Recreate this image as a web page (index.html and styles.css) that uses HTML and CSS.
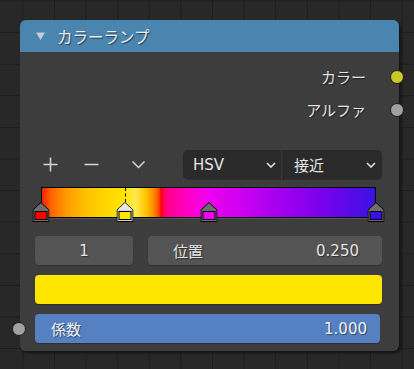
FILE: index.html
```html
<!DOCTYPE html>
<html lang="ja">
<head>
    <meta charset="UTF-8">
    <meta name="viewport" content="width=device-width, initial-scale=1.0">
    <title>カラーランプ</title>
    <link rel="stylesheet" href="styles.css">
</head>
<body>

    <div class="node">
        <div class="node-header">
            <svg class="collapse" width="9" height="8" viewBox="0 0 9 8"><path d="M0 0.5 H9 L4.5 8 Z" fill="#c4ccd4"/></svg>
            <span class="title">カラーランプ</span>
        </div>

        <div class="out-row">
            <span>カラー</span>
            <span class="socket socket-out socket-color"></span>
        </div>
        <div class="out-row">
            <span>アルファ</span>
            <span class="socket socket-out socket-gray"></span>
        </div>

        <div class="controls">
            <svg class="icon icon-plus" width="15" height="15" viewBox="0 0 15 15"><path d="M7.5 0.5 V14.5 M0.5 7.5 H14.5" stroke="#d6d6d6" stroke-width="1.5"/></svg>
            <svg class="icon icon-minus" width="15" height="15" viewBox="0 0 15 15"><path d="M0.5 7.5 H14.5" stroke="#d6d6d6" stroke-width="1.5"/></svg>
            <svg class="icon icon-menu" width="15" height="15" viewBox="0 0 15 15"><path d="M1.5 4.5 L7.5 10.5 L13.5 4.5" fill="none" stroke="#d6d6d6" stroke-width="1.5"/></svg>

            <div class="dropdowns">
                <div class="dropdown dd-mode">
                    <span>HSV</span>
                    <svg width="10" height="6" viewBox="0 0 10 6"><path d="M1 1 L5 5 L9 1" fill="none" stroke="#e0e0e0" stroke-width="1.6"/></svg>
                </div>
                <div class="dropdown dd-interp">
                    <span>接近</span>
                    <svg width="10" height="6" viewBox="0 0 10 6"><path d="M1 1 L5 5 L9 1" fill="none" stroke="#e0e0e0" stroke-width="1.6"/></svg>
                </div>
            </div>
        </div>

        <div class="ramp-wrap">
            <div class="ramp"></div>
            <div class="ramp-dash" style="left: 25%;"></div>

            <svg class="stop" style="left: 0%;" width="17" height="20" viewBox="0 0 17 20">
                <path d="M0.5 19.5 V8 L8.5 0.5 L16.5 8 V19.5 Z" fill="#6e6e6e" stroke="#000"/>
                <rect x="2.5" y="9.5" width="12" height="8" fill="#f00" stroke="#000"/>
            </svg>
            <svg class="stop" style="left: 25%;" width="17" height="20" viewBox="0 0 17 20">
                <path d="M0.5 19.5 V8 L8.5 0.5 L16.5 8 V19.5 Z" fill="#cfcfcf" stroke="#000"/>
                <path d="M1 8 L8.5 1 L16 8 Z" fill="#e6e6e6"/>
                <rect x="2.5" y="9.5" width="12" height="8" fill="#ffe400" stroke="#000"/>
            </svg>
            <svg class="stop" style="left: 50%;" width="17" height="20" viewBox="0 0 17 20">
                <path d="M0.5 19.5 V8 L8.5 0.5 L16.5 8 V19.5 Z" fill="#6e6e6e" stroke="#000"/>
                <rect x="2.5" y="9.5" width="12" height="8" fill="#f000f0" stroke="#000"/>
            </svg>
            <svg class="stop" style="left: 100%;" width="17" height="20" viewBox="0 0 17 20">
                <path d="M0.5 19.5 V8 L8.5 0.5 L16.5 8 V19.5 Z" fill="#6e6e6e" stroke="#000"/>
                <rect x="2.5" y="9.5" width="12" height="8" fill="#3a10e4" stroke="#000"/>
            </svg>
        </div>

        <div class="fields">
            <div class="field field-index">1</div>
            <div class="field field-pos">
                <span>位置</span>
                <span>0.250</span>
            </div>
        </div>

        <div class="swatch"></div>

        <div class="input-row">
            <span class="socket socket-in socket-gray"></span>
            <div class="factor">
                <span>係数</span>
                <span>1.000</span>
            </div>
        </div>
    </div>

</body>
</html>
```

FILE: styles.css
```css
body {
    margin: 0;
    width: 414px;
    height: 369px;
    overflow: hidden;
    background-color: #282828;
    background-image:
        linear-gradient(to right, #1d1d1d 1px, transparent 1px),
        linear-gradient(to bottom, #1d1d1d 1px, transparent 1px);
    background-size: 31.6px 31.6px;
    background-position: 22.4px 0.5px;
    font-family: "DejaVu Sans", "Noto Sans CJK JP", sans-serif;
    font-size: 15px;
    color: #e4e4e4;
}

.node {
    position: relative;
    width: 379px;
    height: 331px;
    margin: 20px 0 0 20px;
    border-radius: 6px;
    background-color: rgba(62, 62, 62, 0.96);
    box-shadow: 2px 2px 3px rgba(0, 0, 0, 0.55);
    display: flex;
    flex-direction: column;
}

.node-header {
    height: 32px;
    display: flex;
    align-items: center;
    padding-left: 16px;
    border-radius: 6px 6px 0 0;
    background-color: rgba(74, 135, 180, 0.97);
}

.collapse {
    margin-right: 12px;
}

.title {
    font-size: 15.5px;
    color: #ececec;
    text-shadow: 1px 1px 1px rgba(0, 0, 0, 0.55);
}

.out-row {
    position: relative;
    height: 33px;
    display: flex;
    align-items: center;
    justify-content: flex-end;
    padding-right: 33px;
    text-shadow: 1px 1px 1px rgba(0, 0, 0, 0.5);
}

.node-header + .out-row {
    margin-top: 8px;
}

.socket {
    position: absolute;
    top: 50%;
    width: 14px;
    height: 14px;
    margin-top: -7px;
    border-radius: 50%;
    box-sizing: border-box;
    border: 1px solid #1c1c1c;
}

.socket-out {
    right: -5px;
}

.socket-in {
    left: -8px;
}

.socket-color {
    background-color: #c8c829;
}

.socket-gray {
    background-color: #a1a1a1;
}

.controls {
    height: 29px;
    margin-top: 24px;
    display: flex;
    align-items: center;
    padding: 0 17px 0 23px;
}

.icon {
    flex: none;
}

.icon-minus {
    margin-left: 26px;
}

.icon-menu {
    margin-left: 32px;
}

.dropdowns {
    margin-left: auto;
    width: 199px;
    height: 29px;
    display: flex;
    border-radius: 5px;
    background-color: #2a2a2a;
    box-shadow: 0 1px 1px rgba(0, 0, 0, 0.25);
}

.dropdown {
    display: flex;
    align-items: center;
    justify-content: space-between;
    box-sizing: border-box;
}

.dd-mode {
    width: 99px;
    padding: 0 5px 0 10px;
    border-right: 1px solid #3c3c3c;
}

.dd-interp {
    flex: 1;
    padding: 0 6px 0 12px;
}

.ramp-wrap {
    position: relative;
    height: 35px;
    margin: 8px 23px 0 21px;
}

.ramp {
    height: 31px;
    box-sizing: border-box;
    border: 1px solid #000;
    box-shadow: 0 1px 0 #555;
    background: linear-gradient(to right,
        #ff2000 0%,
        #ff6000 2.5%,
        #ff9800 7%,
        #ffc000 13%,
        #ffda00 20%,
        #ffe400 25%,
        #ffea50 28%,
        #ffc800 31%,
        #ff8c00 33.5%,
        #ff5000 35%,
        #ff0000 35.8%,
        #ff0060 36.6%,
        #ff0090 38%,
        #ff00c8 44%,
        #f000f0 50%,
        #b000f0 68%,
        #8000ee 82%,
        #3c12e2 100%);
}

.ramp-dash {
    position: absolute;
    top: 1px;
    height: 14px;
    border-left: 1px dashed #000;
}

.stop {
    position: absolute;
    top: 15px;
    transform: translateX(-50%);
}

.fields {
    display: flex;
    gap: 15px;
    margin-top: 14px;
    padding: 0 17px 0 15px;
}

.field {
    height: 29px;
    border-radius: 4px;
    background-color: #545454;
    display: flex;
    align-items: center;
    box-sizing: border-box;
    text-shadow: 1px 1px 1px rgba(0, 0, 0, 0.45);
    box-shadow: 0 1px 1px rgba(0, 0, 0, 0.2);
}

.field-index {
    width: 98px;
    justify-content: center;
}

.field-pos {
    flex: 1;
    justify-content: space-between;
    padding: 0 23px 0 25px;
}

.swatch {
    height: 29px;
    margin: 10px 17px 0 15px;
    border-radius: 4px;
    background-color: #ffe600;
    box-shadow: 0 1px 1px rgba(0, 0, 0, 0.3);
}

.input-row {
    position: relative;
    margin-top: 10px;
    padding: 0 19px 0 15px;
}

.factor {
    height: 29px;
    border-radius: 4px;
    background-color: #5580c2;
    display: flex;
    align-items: center;
    justify-content: space-between;
    padding: 0 13px 0 16px;
    color: #f2f2f2;
    text-shadow: 1px 1px 1px rgba(0, 0, 0, 0.45);
    box-shadow: 0 1px 1px rgba(0, 0, 0, 0.25);
}
```
